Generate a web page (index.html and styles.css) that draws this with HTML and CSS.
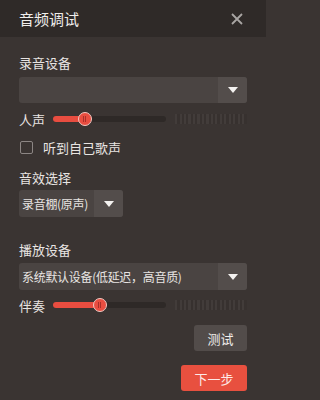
FILE: index.html
```html
<!DOCTYPE html>
<html lang="zh">
<head>
<meta charset="utf-8">
<link rel="stylesheet" href="styles.css">
</head>
<body>
<div class="dialog">
  <div class="header">
    <span class="title">音频调试</span>
    <svg class="close" width="12" height="12" viewBox="0 0 12 12"><path d="M1 1L11 11M11 1L1 11" stroke="#a9a5a3" stroke-width="1.8" fill="none"/></svg>
  </div>
  <div class="content">
    <div class="label l1">录音设备</div>
    <div class="select wide s1"><span class="val"></span><span class="arrow"><i></i></span></div>
    <div class="slider-row r1">
      <span class="slabel">人声</span>
      <div class="track"><div class="fill" style="width:31px"></div><div class="thumb" style="left:31px"><b></b></div></div>
      <div class="meter"></div>
    </div>
    <div class="check-row">
      <span class="box"></span><span class="ctext">听到自己歌声</span>
    </div>
    <div class="label l2">音效选择</div>
    <div class="select narrow s2"><span class="val">录音棚(原声)</span><span class="arrow"><i></i></span></div>
    <div class="label l3">播放设备</div>
    <div class="select wide s3"><span class="val">系统默认设备(低延迟，高音质)</span><span class="arrow"><i></i></span></div>
    <div class="slider-row r2">
      <span class="slabel">伴奏</span>
      <div class="track"><div class="fill" style="width:46px"></div><div class="thumb" style="left:46px"><b></b></div></div>
      <div class="meter"></div>
    </div>
    <div class="btn-row b1"><button class="btn test">测试</button></div>
    <div class="btn-row b2"><button class="btn next">下一步</button></div>
  </div>
</div>
</body>
</html>
```
FILE: styles.css
```css
html, body {
  margin: 0;
  padding: 0;
  background: #3a3432;
}
body {
  width: 266px;
  height: 400px;
  overflow: hidden;
  font-family: "Noto Sans CJK SC", "Noto Sans", sans-serif;
  color: #e4e0de;
}
.dialog {
  width: 266px;
  height: 400px;
  background: #3a3432;
}
.header {
  height: 37px;
  background: #2f2a28;
  display: flex;
  align-items: center;
  justify-content: space-between;
  padding: 0 23px 0 19px;
}
.title {
  font-size: 15px;
  color: #f0eeec;
  line-height: 20px;
}
.close {
  display: block;
}
.content {
  padding: 0 19px;
}
.label {
  font-size: 13px;
  line-height: 18px;
  color: #e8e4e2;
}
.l1 { margin-top: 17px; }
.l2 { margin-top: 12px; }
.l3 { margin-top: 24px; }
.select {
  height: 26px;
  background: #4a4442;
  border-radius: 3px;
  display: flex;
  align-items: center;
  overflow: hidden;
}
.select .val {
  flex: 1;
  font-size: 12px;
  color: #e8e4e2;
  padding-left: 3px;
  white-space: nowrap;
  letter-spacing: -0.3px;
}
.select .arrow {
  width: 29px;
  height: 100%;
  background: #534d4b;
  display: flex;
  align-items: center;
  justify-content: center;
}
.select .arrow i {
  width: 0;
  height: 0;
  border-left: 5px solid transparent;
  border-right: 5px solid transparent;
  border-top: 6px solid #f4f2f0;
}
.wide { width: 228px; }
.narrow { width: 104px; }
.s1 { margin-top: 5px; }
.s2 { margin-top: 3px; height: 27px; }
.s3 { margin-top: 4px; height: 27px; }
.slider-row {
  height: 20px;
  display: flex;
  align-items: center;
}
.r1 { margin-top: 6px; }
.r2 { margin-top: 5px; }
.slabel {
  width: 34px;
  font-size: 13px;
  color: #e8e4e2;
}
.track {
  position: relative;
  width: 114px;
  height: 6px;
  border-radius: 3px;
  background: #2e2927;
}
.fill {
  height: 100%;
  background: #e84d40;
  border-radius: 3px;
}
.thumb {
  position: absolute;
  top: 50%;
  width: 12px;
  height: 12px;
  margin: -7px 0 0 -6px;
  border-radius: 50%;
  background: #e84d40;
  border: 1px solid #f1c8c2;
  display: flex;
  align-items: center;
  justify-content: center;
}
.thumb b {
  width: 3px;
  height: 6px;
  border-left: 1px solid #a8302a;
  border-right: 1px solid #a8302a;
  box-sizing: border-box;
}
.meter {
  margin-left: 9px;
  width: 72px;
  height: 10px;
  background: repeating-linear-gradient(90deg, #423c3a 0 2px, #37312f 2px 4.5px);
}
.check-row {
  margin-top: 9px;
  height: 19px;
  display: flex;
  align-items: center;
}
.box {
  width: 11px;
  height: 11px;
  margin-left: 1px;
  border: 1px solid #8c8684;
  border-radius: 2px;
}
.ctext {
  margin-left: 10px;
  font-size: 13px;
  color: #e8e4e2;
}
.btn-row {
  display: flex;
  justify-content: flex-end;
}
.b1 { margin-top: 10px; }
.b2 { margin-top: 14px; }
.btn {
  height: 26px;
  border: none;
  border-radius: 3px;
  font-family: "Noto Sans CJK SC", "Noto Sans", sans-serif;
  font-size: 13px;
  padding: 0;
  color: #f0eeec;
}
.test {
  width: 53px;
  background: #524c4a;
}
.next {
  width: 66px;
  background: #e8503f;
  color: #fde9e6;
}
```
